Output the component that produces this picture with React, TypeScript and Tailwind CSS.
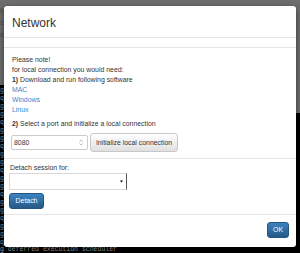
import React from "react";

const termLines = Array.from({ length: 20 }, (_, i) => i);

export default function App() {
  return (
    <div className="relative w-[300px] h-[253px] overflow-hidden bg-[#6e6e6e] font-['Liberation_Sans',Arial,sans-serif]">
      {/* background page */}
      <div className="grid grid-cols-2 h-full">
        <div className="flex flex-col">
          <div className="h-[85px] bg-[#6e6e6e] pt-[5px] pl-0 font-['Liberation_Mono',monospace] text-[7px] leading-[12px] text-[#4a4a4a]">
            <div>h</div>
            <div>c</div>
            <div>e</div>
          </div>
          <div className="flex-1 bg-black font-['Liberation_Mono',monospace] text-[6.5px] leading-[8px] text-[#9a9a9a] pt-[2px]">
            {termLines.map((i) => (
              <div key={i}>{i % 3 === 1 ? "q" : "g"}</div>
            ))}
          </div>
        </div>
        <div className="flex flex-col">
          <div className="h-[113px] bg-[#6e6e6e]" />
          <div className="flex-1 bg-black" />
        </div>
      </div>
      <div className="absolute left-0 bottom-0 w-full h-[7px] bg-black font-['Liberation_Mono',monospace] text-[6.5px] leading-[7px] text-[#a8a8a8] whitespace-pre">
        g deferred execution scheduler
      </div>

      {/* modal */}
      <div className="absolute left-[4px] top-[6px] w-[292px] h-[241px] bg-white rounded-[3px] shadow-[0_2px_6px_rgba(0,0,0,0.5)] flex flex-col text-[#333]">
        <div className="h-[32px] pt-[10px] px-[8px] border-b border-[#e5e5e5]">
          <div className="text-[12px] leading-[14px] text-[#333]">Network</div>
        </div>
        <div className="h-[10px] border-b border-[#e5e5e5]" />
        <div className="px-[8px] pt-[7px] pb-[6px] text-[6.9px] leading-[10px]">
          <div>Please note!</div>
          <div>for local connection you would need:</div>
          <div>
            <span className="font-bold">1)</span> Download and run following software
          </div>
          <div className="text-[#3a87cf]">MAC</div>
          <div className="text-[#3a87cf]">Windows</div>
          <div className="text-[#3a87cf]">Linux</div>
          <div className="mt-[4px]">
            <span className="font-bold">2)</span> Select a port and initialize a local connection
          </div>
          <div className="mt-[4px] flex items-center gap-[2px] -ml-[1px]">
            <div className="w-[77px] h-[15px] border border-[#ccc] rounded-[2px] flex items-center justify-between pl-[2px] pr-[4px]">
              <span>8080</span>
              <svg width="4" height="7" viewBox="0 0 4 7">
                <path d="M0.5 2.5 L2 1 L3.5 2.5" stroke="#aaa" strokeWidth="0.8" fill="none" />
                <path d="M0.5 4.5 L2 6 L3.5 4.5" stroke="#aaa" strokeWidth="0.8" fill="none" />
              </svg>
            </div>
            <div className="w-[88px] h-[19px] border border-[#c8c8c8] rounded-[3px] bg-gradient-to-b from-white to-[#e0e0e0] flex items-center justify-center text-[#333]">
              Initialize local connection
            </div>
          </div>
        </div>
        <div className="border-t border-[#e5e5e5] px-[5px] pt-[4px] pb-[5px] text-[6.9px]">
          <div className="leading-[10px] pl-[1px]">Detach session for:</div>
          <div className="w-[118px] h-[17px] border border-[#d8d8d8] border-r-[#555] border-r-[1.5px] bg-white flex items-center justify-end pr-[3px]">
            <svg width="3" height="3" viewBox="0 0 3 3">
              <path d="M0 0.5 L3 0.5 L1.5 2.5 Z" fill="#000" />
            </svg>
          </div>
          <div className="mt-[3px] w-[35px] h-[16px] rounded-[3px] border border-[#245580] bg-gradient-to-b from-[#3b82c0] to-[#265a88] text-white flex items-center justify-center">
            Detach
          </div>
        </div>
        <div className="flex-1 border-t border-[#e5e5e5] flex justify-end items-start pt-[7px] pr-[7px]">
          <div className="w-[22px] h-[16px] rounded-[3px] border border-[#245580] bg-gradient-to-b from-[#3b82c0] to-[#265a88] text-white flex items-center justify-center text-[6.9px]">
            OK
          </div>
        </div>
      </div>
    </div>
  );
}
